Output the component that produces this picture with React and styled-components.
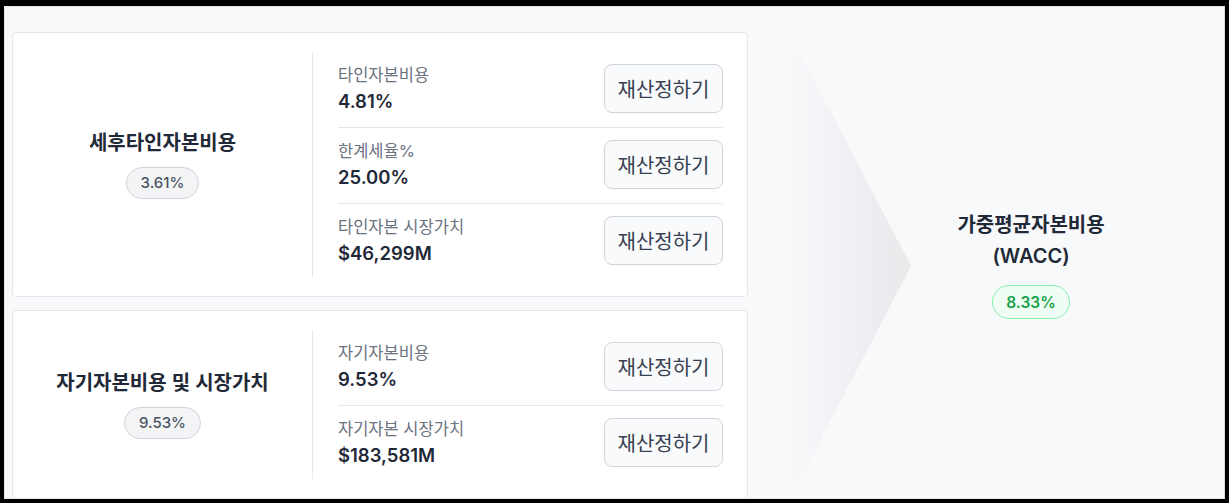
import styled, { createGlobalStyle } from "styled-components";

const GlobalStyle = createGlobalStyle`
  html, body {
    margin: 0;
    padding: 0;
    background: #000;
  }
  body {
    font-family: Inter, "Noto Sans CJK KR", "Noto Sans", sans-serif;
  }
  * {
    box-sizing: border-box;
  }
`;

const Panel = styled.div`
  margin: 6px 4px 4px 4px;
  height: 493px;
  background: #f8f9fb;
  border: 1px solid #e5e7eb;
  border-right-color: #d7d9dd;
  padding: 25px 0 0 7px;
  display: flex;
  overflow: hidden;
`;

const Cards = styled.div`
  width: 736px;
  flex-shrink: 0;
  display: flex;
  flex-direction: column;
  gap: 13px;
`;

const Card = styled.div`
  background: #fff;
  border: 1px solid #e5e7eb;
  border-radius: 4px;
  padding: 19px 24px 19px 0;
  display: flex;
`;

const Summary = styled.div`
  width: 299px;
  flex-shrink: 0;
  display: flex;
  flex-direction: column;
  align-items: center;
  justify-content: center;
  gap: 12px;
`;

const Title = styled.div`
  font-size: 20px;
  line-height: 24px;
  font-weight: 600;
  color: #1f2937;
  text-align: center;
`;

const Badge = styled.span`
  display: inline-flex;
  align-items: center;
  height: ${(p) => (p.$green ? "34px" : "32px")};
  padding: 0 ${(p) => (p.$green ? "13px" : "14px")};
  border-radius: 999px;
  border: 1px solid ${(p) => (p.$green ? "#86efac" : "#d1d5db")};
  background: ${(p) => (p.$green ? "#f0fdf4" : "#f3f4f6")};
  color: ${(p) => (p.$green ? "#16a34a" : "#4b5563")};
  font-size: ${(p) => (p.$green ? "15.5px" : "15px")};
  font-weight: ${(p) => (p.$green ? 600 : 500)};
`;

const Details = styled.div`
  flex: 1;
  border-left: 1px solid #e5e7eb;
  padding-left: 25px;
  display: flex;
  flex-direction: column;
`;

const Row = styled.div`
  display: flex;
  align-items: center;
  justify-content: space-between;
  padding: 12px 0 14px;
  border-bottom: 1px solid #e5e7eb;

  &:last-child {
    border-bottom: none;
    padding-bottom: 12px;
  }
`;

const Info = styled.div`
  display: flex;
  flex-direction: column;
  gap: 3px;
`;

const Label = styled.div`
  font-size: 16.5px;
  line-height: 22px;
  color: #6b7280;
`;

const Value = styled.div`
  font-size: 18.5px;
  line-height: 24px;
  font-weight: 600;
  color: #1f2937;
`;

const Button = styled.button`
  height: 49px;
  padding: 0 12.5px;
  font-family: inherit;
  font-size: 20px;
  color: #374151;
  background: #f9fafb;
  border: 1px solid #d1d5db;
  border-radius: 8px;
  cursor: pointer;
`;

const Result = styled.div`
  flex: 1;
  position: relative;
  height: 465px;
  display: flex;
  flex-direction: column;
  align-items: center;
  justify-content: center;
  padding-left: 90px;
  gap: 13px;
`;

const Arrow = styled.svg`
  position: absolute;
  left: 0;
  top: 15px;
`;

const ResultTitle = styled.div`
  font-size: 20px;
  line-height: 31px;
  font-weight: 600;
  color: #1f2937;
  text-align: center;
`;

const sections = [
  {
    title: "세후타인자본비용",
    badge: "3.61%",
    rows: [
      { label: "타인자본비용", value: "4.81%" },
      { label: "한계세율%", value: "25.00%" },
      { label: "타인자본 시장가치", value: "$46,299M" },
    ],
  },
  {
    title: "자기자본비용 및 시장가치",
    badge: "9.53%",
    rows: [
      { label: "자기자본비용", value: "9.53%" },
      { label: "자기자본 시장가치", value: "$183,581M" },
    ],
  },
];

const App = () => {
  return (
    <>
      <GlobalStyle />
      <Panel>
        <Cards>
          {sections.map((s) => (
            <Card key={s.title}>
              <Summary>
                <Title>{s.title}</Title>
                <Badge>{s.badge}</Badge>
              </Summary>
              <Details>
                {s.rows.map((r) => (
                  <Row key={r.label}>
                    <Info>
                      <Label>{r.label}</Label>
                      <Value>{r.value}</Value>
                    </Info>
                    <Button type="button">재산정하기</Button>
                  </Row>
                ))}
              </Details>
            </Card>
          ))}
        </Cards>
        <Result>
          <Arrow width="163" height="438" viewBox="0 0 163 438">
            <defs>
              <linearGradient id="arrowFade" x1="0" y1="0" x2="1" y2="0">
                <stop offset="0.25" stopColor="#e6e6ea" stopOpacity="0" />
                <stop offset="1" stopColor="#e9e9ec" stopOpacity="1" />
              </linearGradient>
            </defs>
            <polygon points="0,0 49,0 163,219 49,438 0,438" fill="url(#arrowFade)" />
          </Arrow>
          <ResultTitle>
            가중평균자본비용
            <br />
            (WACC)
          </ResultTitle>
          <Badge $green>8.33%</Badge>
        </Result>
      </Panel>
    </>
  );
};

export default App;
